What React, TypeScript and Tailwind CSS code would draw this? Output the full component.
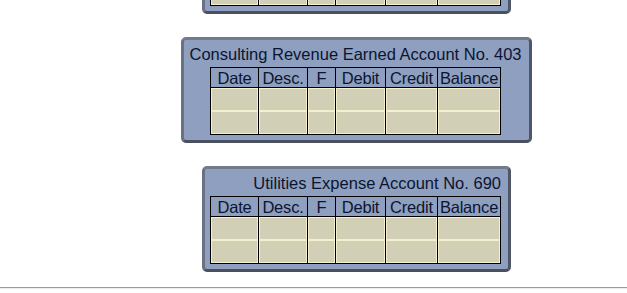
const columns = [
  { label: "Date", w: "w-[48px]" },
  { label: "Desc.", w: "w-[49px]" },
  { label: "F", w: "w-[28px]" },
  { label: "Debit", w: "w-[50px]" },
  { label: "Credit", w: "w-[52px]" },
  { label: "Balance", w: "w-[63px]" },
];

function Ledger({ title, className = "" }: { title: string; className?: string }) {
  return (
    <div
      className={`flex flex-col rounded-[5px] border-[3px] border-t-[#737a8a] border-l-[#6a7182] border-r-[#4f5666] border-b-[#4a5060] bg-[#8f9fbf] pt-[5px] pb-[5px] pl-[5px] pr-[7px] ${className}`}
    >
      <div className="text-right text-[16.5px] leading-[18px] text-[#0b1530] whitespace-nowrap">{title}</div>
      <div className="mt-[4px] flex self-center border-t border-r border-b border-black">
        {columns.map((c) => (
          <div key={c.label} className={`flex flex-col border-l border-black ${c.w}`}>
            <div className="flex h-[20px] items-center justify-center border-b border-black text-[16.5px] leading-[18px] tracking-[-0.2px] text-[#0b1530]">
              {c.label}
            </div>
            <div className="h-[23px] border border-[#f3efcf] bg-[#d1cfb6]" />
            <div className="h-[23px] border border-[#f3efcf] bg-[#d1cfb6]" />
          </div>
        ))}
      </div>
    </div>
  );
}

export default function App() {
  return (
    <div className="h-[293px] w-[627px] overflow-hidden bg-white font-['Liberation_Sans',Arial,sans-serif]">
      <div className="flex flex-col items-center gap-[23px] pl-[86px]">
        <Ledger title="Salaries Expense Account No. 622" className="-mt-[92px]" />
        <Ledger title="Consulting Revenue Earned Account No. 403" />
        <Ledger title="Utilities Expense Account No. 690" />
      </div>
      <hr className="mt-[15px] h-[2px] border-t border-b-0 border-[#9a9a9a] bg-[#ececec]" />
    </div>
  );
}
